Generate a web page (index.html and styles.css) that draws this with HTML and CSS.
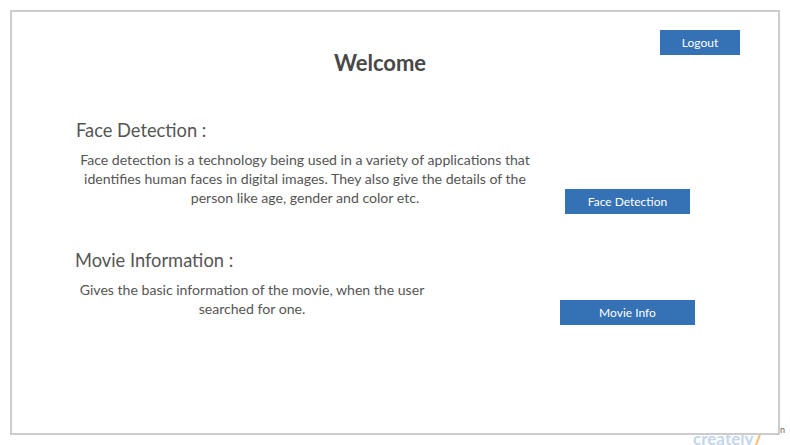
FILE: index.html
```html
<!DOCTYPE html>
<html>
<head>
<meta charset="utf-8">
<link rel="stylesheet" href="styles.css">
</head>
<body>
<div class="watermark"><span class="wm-text">creately</span><span class="wm-slash">/</span></div>
<span class="wm-n">n</span>
<main class="frame">
  <header class="header">
    <h1 class="title">Welcome</h1>
    <button class="btn btn-logout">Logout</button>
  </header>
  <section class="row row-face">
    <div class="info">
      <h2 class="heading">Face Detection :</h2>
      <p class="desc desc-face">Face detection is a technology being used in a variety of applications that identifies human faces in digital images. They also give the details of the person like age, gender and color etc.</p>
    </div>
    <div class="action">
      <button class="btn btn-face">Face Detection</button>
    </div>
  </section>
  <section class="row row-movie">
    <div class="info">
      <h2 class="heading">Movie Information :</h2>
      <p class="desc desc-movie">Gives the basic information of the movie, when the user searched for one.</p>
    </div>
    <div class="action">
      <button class="btn btn-movie">Movie Info</button>
    </div>
  </section>
</main>
</body>
</html>
```
FILE: styles.css
```css
* { box-sizing: border-box; }
html, body { margin: 0; padding: 0; }
body {
  width: 790px;
  height: 445px;
  background: #fff;
  font-family: Lato, "Open Sans", sans-serif;
  color: #555;
  position: relative;
  overflow: hidden;
}
.watermark {
  position: absolute;
  left: 693px;
  top: 429px;
  font-family: Lato, sans-serif;
  font-weight: bold;
  font-size: 17px;
  line-height: 20px;
  color: #c4d6ea;
  white-space: nowrap;
}
.wm-slash { color: #f7b15a; margin-left: 1px; }
.wm-n {
  position: absolute;
  left: 780px;
  top: 424px;
  font-size: 9px;
  line-height: 12px;
  color: #666;
}
.frame {
  position: relative;
  z-index: 1;
  margin: 10px;
  width: 770px;
  height: 425px;
  border: 2px solid #cccccc;
  background: #fff;
}
.header {
  display: grid;
}
.title {
  grid-area: 1 / 1;
  margin: 38px 0 0;
  padding-right: 30px;
  text-align: center;
  font-size: 22px;
  line-height: 26px;
  font-weight: bold;
  color: #484848;
}
.btn {
  border: none;
  background: #3571b5;
  color: #fff;
  font-family: Lato, sans-serif;
  font-size: 12px;
  height: 25px;
  padding: 0;
  cursor: pointer;
}
.btn-logout {
  grid-area: 1 / 1;
  justify-self: end;
  align-self: start;
  margin: 18px 38px 0 0;
  width: 80px;
}
.row {
  display: flex;
  align-items: flex-end;
  padding-left: 64px;
}
.row-face { margin-top: 43px; }
.row-movie { margin-top: 35px; }
.info { width: 454px; }
.heading {
  margin: 0;
  font-size: 18.3px;
  line-height: 22px;
  font-weight: normal;
  color: #555;
}
.row-movie .heading { margin-left: -1px; }
.desc {
  margin: 9px 0 7px 2px;
  font-size: 14.1px;
  line-height: 19px;
  text-align: center;
  color: #555;
}
.desc-face { width: 454px; }
.desc-movie { width: 348px; }
.action {
  width: 195px;
  display: flex;
  justify-content: center;
}
.btn-face { width: 125px; }
.btn-movie { width: 135px; }
```
